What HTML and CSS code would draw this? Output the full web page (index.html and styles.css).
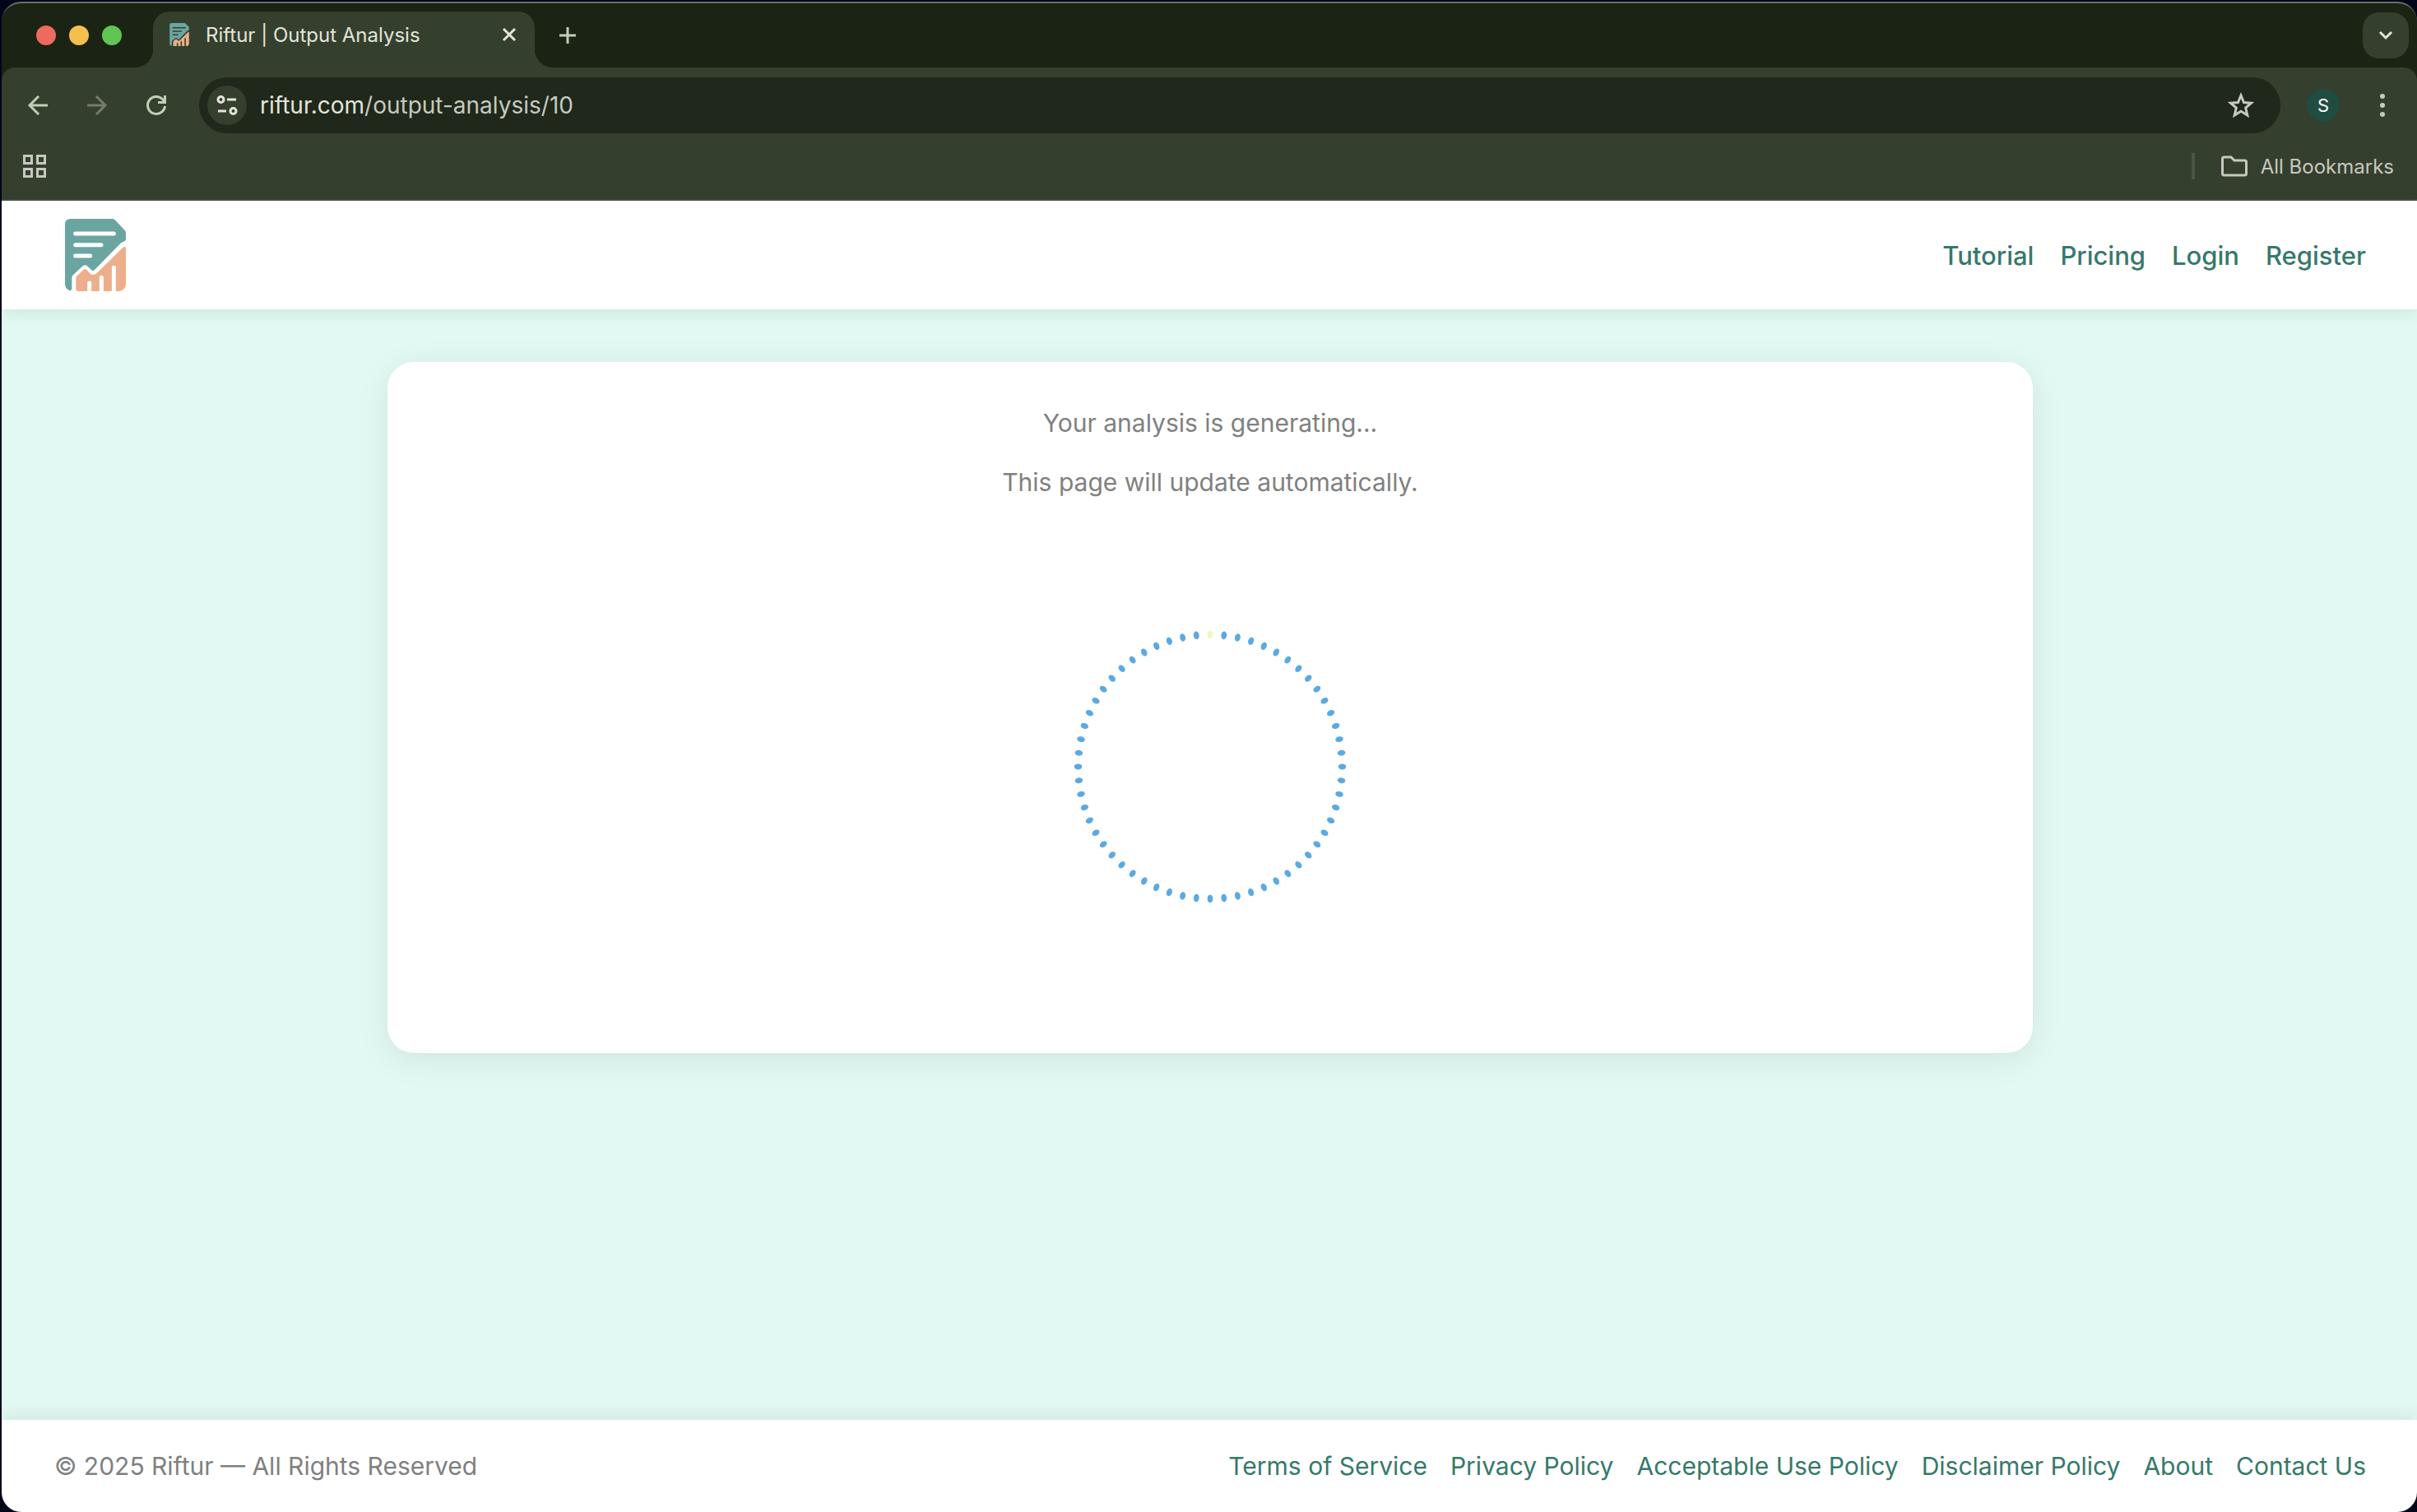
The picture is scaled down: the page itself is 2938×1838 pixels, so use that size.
FILE: index.html
```html
<!DOCTYPE html>
<html lang="en">

<head>
    <meta charset="UTF-8">
    <meta name="viewport" content="width=device-width, initial-scale=1.0">
    <title>Riftur | Output Analysis</title>
    <link rel="stylesheet" href="styles.css">
</head>

<body>
    <svg class="sprite" aria-hidden="true">
        <symbol id="logo" viewBox="0 0 222 264">
            <path fill="#6ba5a1" d="M20 0H172Q178 0 182 4L218 42Q222 46 222 52V76Q220 82 212 84Q206 86 202 90L108 186Q102 192 96 186L80 171Q73 166 66 171L28 206Q25 209 25 214V254Q24 262 18 262Q0 256 0 238V20Q0 0 20 0Z" />
            <path fill="#edae8b" d="M40 216Q40 212 44 208L70 184Q74 182 78 185L92 200Q104 208 116 198L212 104Q222 98 222 108V238Q220 262 196 264H46Q40 264 40 258Z" />
            <path fill="none" stroke="currentColor" stroke-width="15" stroke-linecap="round" d="M38 54H178M38 95H132M38 135H92M89 234V280M133 214V280M178 178V280" />
        </symbol>
    </svg>

    <div class="browser">
        <div class="tab-strip">
            <div class="lights">
                <span class="light red"></span>
                <span class="light yellow"></span>
                <span class="light green"></span>
            </div>
            <div class="tab">
                <svg class="favicon"><use href="#logo" /></svg>
                <span class="tab-title">Riftur | Output Analysis</span>
                <button class="icon-btn" aria-label="Close tab">
                    <svg width="18" height="18" viewBox="0 0 18 18"><path d="M2 2L16 16M16 2L2 16" /></svg>
                </button>
            </div>
            <button class="icon-btn new-tab" aria-label="New tab">
                <svg width="20" height="20" viewBox="0 0 20 20"><path d="M10 0V20M0 10H20" /></svg>
            </button>
            <button class="icon-btn tab-search" aria-label="Search tabs">
                <svg width="18" height="12" viewBox="0 0 18 12"><path d="M2 2L9 9L16 2" /></svg>
            </button>
        </div>

        <div class="toolbar">
            <button class="icon-btn" aria-label="Back">
                <svg width="26" height="26" viewBox="0 0 26 26"><path d="M25 13H3M14 2L3 13L14 24" /></svg>
            </button>
            <button class="icon-btn disabled" aria-label="Forward">
                <svg width="26" height="26" viewBox="0 0 26 26"><path d="M1 13H23M12 2L23 13L12 24" /></svg>
            </button>
            <button class="icon-btn" aria-label="Reload">
                <svg width="26" height="26" viewBox="0 0 26 26"><path d="M23.500 14A10.500 10.500 0 1 1 20.500 5.500L23.500 9M23.500 1V9.500H15" /></svg>
            </button>
            <div class="address">
                <button class="site-info" aria-label="Site information">
                    <svg width="26" height="26" viewBox="0 0 26 26"><circle cx="5.500" cy="6" r="3.500" /><path d="M13 6H24M2 20H12" /><circle cx="20.500" cy="20" r="3.500" /></svg>
                </button>
                <a class="url" href="#">riftur.com<span>/output-analysis/10</span></a>
                <button class="icon-btn star" aria-label="Bookmark this page">
                    <svg width="32" height="32" viewBox="0 0 32 32"><path d="M16 4L19.500 12.500L28.500 13.200L21.700 19.100L23.800 28L16 23.200L8.200 28L10.300 19.100L3.500 13.200L12.500 12.500Z" /></svg>
                </button>
            </div>
            <button class="avatar" aria-label="Profile">S</button>
            <button class="icon-btn menu" aria-label="Menu">
                <svg width="8" height="30" viewBox="0 0 8 30"><circle cx="4" cy="4" r="3" /><circle cx="4" cy="15" r="3" /><circle cx="4" cy="26" r="3" /></svg>
            </button>
        </div>

        <div class="bookmarks">
            <button class="icon-btn" aria-label="Apps">
                <svg width="28" height="28" viewBox="0 0 28 28"><path d="M1.500 1.500H10.500V10.500H1.500ZM17.500 1.500H26.500V10.500H17.500ZM1.500 17.500H10.500V26.500H1.500ZM17.500 17.500H26.500V26.500H17.500Z" /></svg>
            </button>
            <button class="all-bookmarks">
                <svg width="32" height="26" viewBox="0 0 32 26"><path d="M3.500 2H12L16 6H28.500Q30.500 6 30.500 8V22Q30.500 24 28.500 24H3.500Q1.500 24 1.500 22V4Q1.500 2 3.500 2Z" /></svg>
                All Bookmarks
            </button>
        </div>

        <header class="site-header">
            <a href="#" aria-label="Riftur"><svg class="logo"><use href="#logo" /></svg></a>
            <nav class="nav">
                <a href="#">Tutorial</a>
                <a href="#">Pricing</a>
                <a href="#">Login</a>
                <a href="#">Register</a>
            </nav>
        </header>

        <main>
            <div class="card">
                <p>Your analysis is generating...</p>
                <p>This page will update automatically.</p>
                <svg class="spinner" id="spinner" viewBox="-170 -170 340 340"></svg>
            </div>
        </main>

        <footer class="site-footer">
            <span>© 2025 Riftur — All Rights Reserved</span>
            <nav class="footer-links">
                <a href="#">Terms of Service</a>
                <a href="#">Privacy Policy</a>
                <a href="#">Acceptable Use Policy</a>
                <a href="#">Disclaimer Policy</a>
                <a href="#">About</a>
                <a href="#">Contact Us</a>
            </nav>
        </footer>
    </div>

    <script>
        // 60 ticks, the active one is yellow
        let spinner = document.getElementById("spinner");
        for (let i = 0; i < 60; i++) {
            let tick = document.createElementNS("http://www.w3.org/2000/svg", "ellipse");
            tick.setAttribute("cy", -160.5);
            tick.setAttribute("rx", 3.4);
            tick.setAttribute("ry", 4.8);
            tick.setAttribute("transform", `rotate(${i * 6})`);
            if (i === 0) tick.setAttribute("class", "active");
            spinner.appendChild(tick);
        }
    </script>
</body>

</html>
```
FILE: styles.css
```css
* {
    box-sizing: border-box;
}

body {
    margin: 0;
    background-color: #02041a;
    font-family: Inter, 'Liberation Sans', sans-serif;
    font-size: 30px;
    color: #808080;
}

button {
    font-family: inherit;
    border: none;
    padding: 0;
    background: none;
    cursor: pointer;
}

a {
    color: #35796a;
    text-decoration: none;
}

.sprite {
    position: absolute;
    width: 0;
    height: 0;
}

.browser {
    display: flex;
    flex-direction: column;
    min-height: calc(100vh - 2px);
    margin: 2px 0 0 2px;
    border-top: 2px solid #6b7166;
    border-radius: 24px;
    overflow: hidden;
    background: #1a2314;
}

/* browser chrome */
.tab-strip {
    display: flex;
    align-items: center;
    height: 78px;
    padding: 0 10px 0 42px;
}

.lights {
    display: flex;
    gap: 16px;
    margin-right: 38px;
}

.light {
    width: 24px;
    height: 24px;
    border-radius: 50%;
}

.red {
    background: #ed6a5e;
}

.yellow {
    background: #f5bf4f;
}

.green {
    background: #61c554;
}

.tab {
    position: relative;
    display: flex;
    align-items: center;
    align-self: flex-end;
    width: 464px;
    height: 68px;
    padding: 0 22px 12px 20px;
    border-radius: 20px 20px 0 0;
    background: #353f2e;
    color: #e3e5dc;
    font-size: 24px;
}

.tab::before,
.tab::after {
    content: "";
    position: absolute;
    bottom: 0;
    width: 22px;
    height: 22px;
}

.tab::before {
    left: -22px;
    background: radial-gradient(circle at 0 0, transparent 22px, #353f2e 22px);
}

.tab::after {
    right: -22px;
    background: radial-gradient(circle at 100% 0, transparent 22px, #353f2e 22px);
}

.favicon {
    width: 24px;
    height: 28px;
    margin-right: 20px;
    color: #353f2e;
}

.tab-title {
    flex: 1;
}

.icon-btn {
    display: flex;
    align-items: center;
    justify-content: center;
    color: #c1ceb8;
}

.icon-btn svg,
.site-info svg,
.all-bookmarks svg {
    fill: none;
    stroke: currentColor;
    stroke-width: 3;
}

.tab .icon-btn,
.tab-search {
    color: #e3e5dc;
}

.new-tab {
    margin-left: 30px;
}

.tab-search {
    width: 56px;
    height: 56px;
    margin-left: auto;
    border-radius: 20px;
    background: #353f2e;
}

.toolbar {
    display: flex;
    align-items: center;
    height: 92px;
    padding: 0 38px 0 31px;
    gap: 46px;
    border-radius: 16px 16px 0 0;
    background: #353f2e;
}

.toolbar .disabled {
    color: #737c6b;
}

.address {
    flex: 1;
    display: flex;
    align-items: center;
    height: 68px;
    margin-left: -7px;
    padding: 0 32px 0 10px;
    border-radius: 34px;
    background: #1f281a;
}

.site-info {
    display: flex;
    align-items: center;
    justify-content: center;
    width: 48px;
    height: 48px;
    margin-right: 16px;
    border-radius: 50%;
    background: #353f2e;
    color: #e3e5dc;
}

.url {
    flex: 1;
    font-size: 28px;
    color: #e3e5dc;
}

.url span,
.star {
    color: #c6c9c0;
}

.avatar {
    width: 40px;
    height: 40px;
    margin: 0 2px 0 -14px;
    border-radius: 50%;
    background: #1f4d41;
    color: #fff;
    font-size: 22px;
}

.menu svg {
    fill: currentColor;
    stroke: none;
}

.bookmarks {
    display: flex;
    align-items: center;
    justify-content: space-between;
    height: 70px;
    padding: 0 28px 12px 26px;
    border-bottom: 2px solid #4a4a4a;
    background: #353f2e;
}

.bookmarks .icon-btn {
    color: #c6c9c0;
}

.all-bookmarks {
    display: flex;
    align-items: center;
    gap: 16px;
    height: 32px;
    padding-left: 32px;
    border-left: 4px solid #4b5645;
    color: #c6c9c0;
    font-size: 24px;
}

/* page */
.site-header {
    position: relative;
    display: flex;
    align-items: center;
    justify-content: space-between;
    height: 132px;
    padding: 0 62px 0 77px;
    background: #fff;
    box-shadow: 0 4px 20px rgba(0, 0, 0, 0.08);
}

.site-header a {
    display: block;
}

.logo {
    display: block;
    width: 74px;
    height: 88px;
    color: #fff;
}

.nav {
    display: flex;
    gap: 32px;
    font-size: 31px;
    font-weight: 500;
}

main {
    flex: 1;
    padding: 64px 32px 64px 34px;
    background: #e1f9f2;
}

.card {
    display: flex;
    flex-direction: column;
    align-items: center;
    max-width: 2000px;
    height: 840px;
    margin: 0 auto;
    padding: 50px 48px 48px;
    border-radius: 32px;
    background: #fff;
    box-shadow: 0 8px 40px rgba(0, 0, 0, 0.08);
}

.card p {
    margin: 0 0 24px;
    line-height: 48px;
}

.spinner {
    width: 340px;
    height: 340px;
    margin-top: 128px;
    fill: #5ba9e2;
}

.spinner .active {
    fill: #f0f7c1;
}

.site-footer {
    position: relative;
    display: flex;
    align-items: center;
    justify-content: space-between;
    height: 112px;
    padding: 0 62px 0 64px;
    background: #fff;
    box-shadow: 0 -4px 20px rgba(0, 0, 0, 0.08);
}

.footer-links {
    display: flex;
    gap: 28px;
}
```
